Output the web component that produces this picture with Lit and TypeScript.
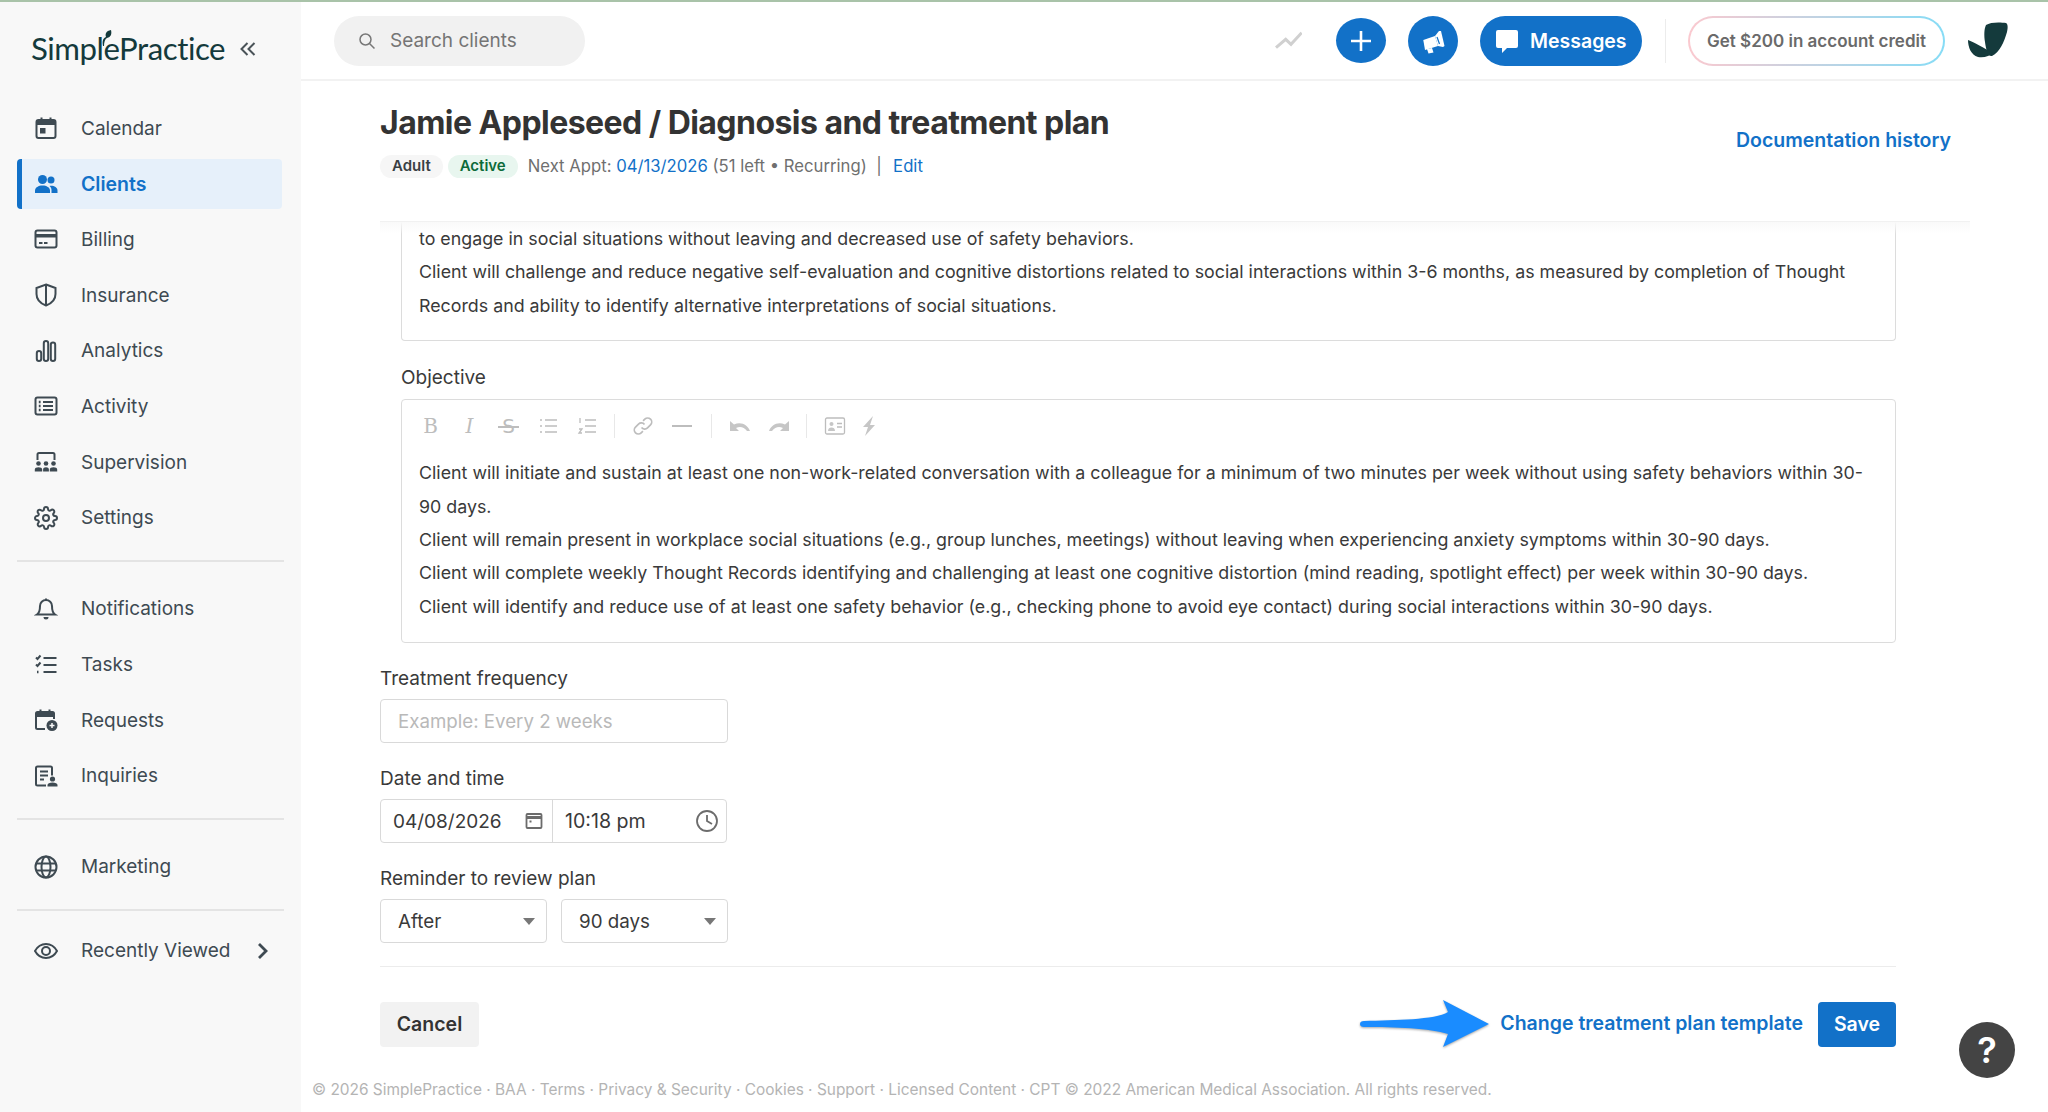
import { LitElement, html, svg, css } from 'lit';
import { customElement } from 'lit/decorators.js';

const icons = {
  calendar: svg`<rect x="2.500" y="4" width="19" height="18" rx="2"/><path class="f" d="M2.500 5.500a1.500 1.500 0 0 1 1.500-1.500h16a1.500 1.500 0 0 1 1.500 1.500V9h-19z"/><path d="M7.500 1.500V4M16.500 1.500V4"/><rect class="f" x="6" y="12" width="5.500" height="5.500"/>`,
  clients: svg`<g class="f"><circle cx="8.500" cy="7.500" r="4.500"/><circle cx="17" cy="8" r="3.500"/><path d="M1 21v-2.500c0-3 3.500-5 7.500-5s7.500 2 7.500 5V21z"/><path d="M17.500 21v-3c0-1.600-.8-3-2-4 .5-.1 1-.2 1.500-.2 3.500 0 6.500 1.800 6.500 4.600V21z"/></g>`,
  billing: svg`<rect x="1.500" y="3.500" width="21" height="17" rx="2"/><path class="f" d="M1.500 7h21v3.500h-21z"/><path d="M5 16h3.500M10 16h3.500"/>`,
  insurance: svg`<path d="M12 1.500l9.500 3.500v6c0 5.800-4 9.500-9.500 11.500C6.500 20.500 2.500 16.800 2.500 11V5z"/><path d="M12 1.500v21"/>`,
  analytics: svg`<rect x="2.800" y="12" width="4.400" height="10" rx="2.200"/><rect x="9.800" y="2" width="4.400" height="20" rx="2.200"/><rect x="16.800" y="3.500" width="4.400" height="18.500" rx="2.200"/>`,
  activity: svg`<rect x="1.500" y="3.500" width="21" height="17" rx="2"/><path d="M9 8h10M9 12h10M9 16h10"/><path class="d" d="M4.800 8h1.800M4.800 12h1.800M4.800 16h1.800"/>`,
  supervision: svg`<path d="M3.500 10V4.500a1.500 1.500 0 0 1 1.500-1.500h14a1.500 1.500 0 0 1 1.500 1.500V10"/><g class="f"><circle cx="4.500" cy="13.500" r="2.300"/><circle cx="12" cy="13.500" r="2.300"/><circle cx="19.500" cy="13.500" r="2.300"/><path d="M.8 21.500v-2c0-1.300 1.600-2.200 3.700-2.200s3.700.9 3.700 2.200v2zM9.100 21.500v-2c0-1.300 1.200-2.200 2.900-2.200s2.900.9 2.900 2.200v2zM15.800 21.500v-2c0-1.300 1.600-2.200 3.700-2.200s3.700.9 3.700 2.200v2z"/></g>`,
  settings: svg`<circle cx="12" cy="12" r="3"/><path d="M19.400 15a1.650 1.650 0 0 0 .33 1.820l.06.06a2 2 0 0 1 0 2.830 2 2 0 0 1-2.830 0l-.06-.06a1.650 1.650 0 0 0-1.820-.33 1.650 1.650 0 0 0-1 1.510V21a2 2 0 0 1-2 2 2 2 0 0 1-2-2v-.09A1.650 1.650 0 0 0 9 19.400a1.650 1.650 0 0 0-1.820.33l-.06.06a2 2 0 0 1-2.830 0 2 2 0 0 1 0-2.830l.06-.06a1.650 1.650 0 0 0 .33-1.820 1.650 1.650 0 0 0-1.510-1H3a2 2 0 0 1-2-2 2 2 0 0 1 2-2h.09A1.650 1.650 0 0 0 4.600 9a1.650 1.650 0 0 0-.33-1.820l-.06-.06a2 2 0 0 1 0-2.830 2 2 0 0 1 2.830 0l.06.06a1.650 1.650 0 0 0 1.820.33H9a1.650 1.650 0 0 0 1-1.510V3a2 2 0 0 1 2-2 2 2 0 0 1 2 2v.09a1.650 1.650 0 0 0 1 1.510 1.650 1.650 0 0 0 1.820-.33l.06-.06a2 2 0 0 1 2.830 0 2 2 0 0 1 0 2.830l-.06.06a1.650 1.650 0 0 0-.33 1.820V9a1.650 1.650 0 0 0 1.510 1H21a2 2 0 0 1 2 2 2 2 0 0 1-2 2h-.09a1.650 1.650 0 0 0-1.510 1z"/>`,
  bell: svg`<path d="M18 9A6 6 0 0 0 6 9c0 6.500-3 8.500-3 8.500h18s-3-2-3-8.500"/><path d="M12 1.500V3"/><path class="f" d="M9.500 20h5a2.500 2.500 0 0 1-5 0z"/>`,
  tasks: svg`<path d="M9.500 5h13M9.500 12h13M9.500 19h13"/><path d="M2 4.500l1.500 1.500L6.500 2.500M2 11.500l1.500 1.500L6.500 9.500"/><path class="d" d="M3 19h1.500"/>`,
  requests: svg`<path d="M11 21H3.500A1.500 1.500 0 0 1 2 19.500v-14A1.500 1.500 0 0 1 3.500 4h15A1.500 1.500 0 0 1 20 5.500V11"/><path class="f" d="M2 5.500A1.500 1.500 0 0 1 3.500 4h15A1.500 1.500 0 0 1 20 5.500V9H2z"/><path d="M6.500 1.500V4M15.500 1.500V4"/><circle class="f" cx="18" cy="17.500" r="5.500"/><path class="w" d="M15.500 17.500h5M18 15v5"/>`,
  inquiries: svg`<path d="M12 21.500H3.500A1.500 1.500 0 0 1 2 20V4a1.500 1.500 0 0 1 1.500-1.500h13A1.500 1.500 0 0 1 18 4v7.500"/><path d="M6 7.500h8M6 11.500h8M6 15.500h4"/><g class="f"><circle cx="18.500" cy="15" r="2.600"/><path d="M13.500 22.500v-1.500c0-1.500 2.200-2.500 5-2.500s5 1 5 2.500v1.500z"/></g>`,
  globe: svg`<circle cx="12" cy="12" r="10.500"/><ellipse cx="12" cy="12" rx="4.500" ry="10.500"/><path d="M2 8.500h20M2 15.500h20"/>`,
  eye: svg`<path d="M1 12c2.500-4.500 6.500-7 11-7s8.500 2.500 11 7c-2.500 4.500-6.500 7-11 7s-8.500-2.500-11-7z"/><circle cx="12" cy="12" r="4"/>`,
};

type NavItem = { label: string; icon: keyof typeof icons; active?: boolean };

const groupOne: NavItem[] = [
  { label: 'Calendar', icon: 'calendar' },
  { label: 'Clients', icon: 'clients', active: true },
  { label: 'Billing', icon: 'billing' },
  { label: 'Insurance', icon: 'insurance' },
  { label: 'Analytics', icon: 'analytics' },
  { label: 'Activity', icon: 'activity' },
  { label: 'Supervision', icon: 'supervision' },
  { label: 'Settings', icon: 'settings' },
];

const groupTwo: NavItem[] = [
  { label: 'Notifications', icon: 'bell' },
  { label: 'Tasks', icon: 'tasks' },
  { label: 'Requests', icon: 'requests' },
  { label: 'Inquiries', icon: 'inquiries' },
];

const goalLines = [
  'to engage in social situations without leaving and decreased use of safety behaviors.',
  'Client will challenge and reduce negative self-evaluation and cognitive distortions related to social interactions within 3-6 months, as measured by completion of Thought Records and ability to identify alternative interpretations of social situations.',
];

const objectiveLines = [
  'Client will initiate and sustain at least one non-work-related conversation with a colleague for a minimum of two minutes per week without using safety behaviors within 30-90 days.',
  'Client will remain present in workplace social situations (e.g., group lunches, meetings) without leaving when experiencing anxiety symptoms within 30-90 days.',
  'Client will complete weekly Thought Records identifying and challenging at least one cognitive distortion (mind reading, spotlight effect) per week within 30-90 days.',
  'Client will identify and reduce use of at least one safety behavior (e.g., checking phone to avoid eye contact) during social interactions within 30-90 days.',
];

const footerLinks = ['BAA', 'Terms', 'Privacy & Security', 'Cookies', 'Support', 'Licensed Content'];

@customElement('app-root')
export class AppRoot extends LitElement {
  static styles = css`
    :host {
      display: flex;
      width: 2048px;
      height: 1112px;
      box-sizing: border-box;
      border-top: 2px solid #a9c3a9;
      font-family: Inter, 'Liberation Sans', sans-serif;
      color: #333;
      background: #fff;
      overflow: hidden;
      position: relative;
    }
    * { box-sizing: border-box; }

    /* sidebar */
    .sidebar {
      width: 301px;
      flex-shrink: 0;
      background: #f8f8f8;
      padding: 0 17px;
    }
    .brand {
      height: 101px;
      display: flex;
      align-items: flex-start;
      padding: 26px 0 0 14px;
      color: #143a3c;
    }
    .logo {
      position: relative;
      font-family: Lato, sans-serif;
      font-size: 31.200px;
      letter-spacing: -0.450px;
      line-height: 40px;
      width: 208px;
      flex-shrink: 0;
      white-space: nowrap;
    }
    .logo svg {
      position: absolute;
      left: 66px;
      top: 1px;
      width: 16px;
      height: 18px;
    }
    .collapse {
      width: 18px;
      height: 18px;
      fill: none;
      stroke: #4a5358;
      stroke-width: 2;
      margin: 12px 0 0 0;
      flex-shrink: 0;
    }
    .group { display: flex; flex-direction: column; gap: 5.700px; }
    .item {
      width: 265px;
      height: 50px;
      display: flex;
      align-items: center;
      padding-left: 17px;
      gap: 23px;
      font-size: 19px;
      color: #3e4a52;
      border-radius: 4px;
      white-space: nowrap;
    }
    .item.active {
      background: #e6f0fa;
      color: #1271c8;
      font-weight: 600;
      font-size: 19.500px;
      border-left: 5px solid #1271c8;
      padding-left: 12px;
    }
    .ico {
      width: 24px;
      height: 24px;
      flex-shrink: 0;
      fill: none;
      stroke: currentColor;
      stroke-width: 2;
    }
    .ico .f { fill: currentColor; stroke: none; }
    .ico .d { stroke-width: 2.400; }
    .ico .w { stroke: #f8f8f8; stroke-width: 1.500; }
    .rule { height: 2px; background: #e4e4e4; width: 267px; }
    .rule.a { margin: 17px 0 22px; }
    .rule.b { margin: 17px 0 22px; }
    .rule.c { margin: 17px 0 15px; }
    .more { margin-left: auto; margin-right: 12px; width: 14px; height: 20px; fill: none; stroke: #3e4a52; stroke-width: 2.800; }

    /* top bar */
    .main { flex: 1; display: flex; flex-direction: column; min-width: 0; }
    .topbar {
      height: 79px;
      flex-shrink: 0;
      display: flex;
      align-items: center;
      padding: 0 39px 0 33px;
      border-bottom: 2px solid #f2f2f2;
    }
    .search {
      width: 251px;
      height: 50px;
      border-radius: 25px;
      background: #f1f1f1;
      display: flex;
      align-items: center;
      padding-left: 24px;
      gap: 14px;
      font-size: 19px;
      color: #757575;
    }
    .search svg { width: 18px; height: 18px; fill: none; stroke: #777; stroke-width: 1.500; }
    .actions { margin-left: auto; display: flex; align-items: center; gap: 22px; }
    .trend { width: 27px; height: 20px; fill: none; stroke: #d0d0d0; stroke-width: 3; margin-right: 12px; }
    .round {
      width: 50px;
      height: 50px;
      border-radius: 50%;
      background: #1271c8;
      display: flex;
      align-items: center;
      justify-content: center;
    }
    .round.short { height: 45px; border-radius: 25px / 22.500px; }
    .round svg { width: 26px; height: 26px; }
    .msg {
      width: 162px;
      height: 50px;
      border-radius: 25px;
      background: #1271c8;
      color: #fff;
      font-size: 19.500px;
      font-weight: 600;
      display: flex;
      align-items: center;
      padding-left: 15px;
      gap: 11px;
    }
    .msg svg { width: 24px; height: 26px; fill: #fff; }
    .vline { width: 1px; height: 44px; background: #ececec; margin-left: 1px; }
    .credit {
      width: 257px;
      height: 50px;
      border-radius: 25px;
      border: 2px solid transparent;
      background: linear-gradient(#fff, #fff) padding-box,
        linear-gradient(90deg, #fbc9cf, #86dcf6) border-box;
      display: flex;
      align-items: center;
      justify-content: center;
      font-size: 17px;
      font-weight: 600;
      color: #6a6a6a;
      white-space: nowrap;
    }
    .avatar { width: 41px; height: 37px; fill: #143a3c; margin-left: 1px; }

    /* page heading */
    .head {
      height: 140px;
      flex-shrink: 0;
      padding: 22px 97px 0 79px;
      display: flex;
      justify-content: space-between;
    }
    h1 {
      margin: 0;
      font-size: 32px;
      line-height: 40px;
      font-weight: 700;
      letter-spacing: -0.550px;
      color: #333;
    }
    .meta {
      margin-top: 11px;
      display: flex;
      align-items: center;
      font-size: 16.700px;
      line-height: 24px;
      color: #6f6f6f;
      white-space: pre;
    }
    .pill {
      height: 23px;
      border-radius: 12px;
      padding: 0 12px;
      display: flex;
      align-items: center;
      font-size: 15px;
      font-weight: 600;
      background: #f6f6f6;
      color: #3a3f44;
      margin-right: 5px;
    }
    .pill.on { background: #e8f6ef; color: #0d6b3a; margin-right: 10px; }
    .link { color: #1271c8; }
    .edit { margin-left: 2px; }
    .doc { font-size: 19.500px; font-weight: 600; color: #1271c8; margin-top: 25px; white-space: nowrap; }

    /* form */
    .scroll {
      flex: 1;
      min-height: 0;
      margin: 0 78px 0 79px;
      padding-right: 74px;
      position: relative;
      border-top: 1px solid #f1f1f1;
    }
    .scroll::before {
      content: '';
      position: absolute;
      left: 0;
      right: 0;
      top: 0;
      height: 12px;
      background: linear-gradient(#f9f9f9, rgba(255, 255, 255, 0));
      pointer-events: none;
    }
    .sub { margin-left: 21px; }
    .editor {
      border: 1px solid #dcdcdc;
      border-radius: 4px;
      font-size: 17.820px;
      line-height: 33.400px;
      color: #3a3a3a;
      padding: 0 24px 18px 17px;
    }
    .editor p { margin: 0; }
    .editor.clipped { border-top: 0; border-radius: 0 0 4px 4px; }
    .editor.full { margin-top: 9px; padding-top: 14px; padding-bottom: 19px; }
    label {
      display: block;
      font-size: 19px;
      line-height: 24px;
      color: #3a3a3a;
    }
    .tools { display: flex; align-items: center; height: 24px; margin: 0 0 18px -8px; color: #bdbdbd; }
    .tool { width: 39px; height: 24px; display: flex; align-items: center; justify-content: center; }
    .tool svg { width: 22px; height: 22px; fill: none; stroke: #bdbdbd; stroke-width: 1.700; }
    .tool svg .f { fill: #c6c6c6; stroke: none; }
    .tool span { font-family: 'DejaVu Serif', serif; font-size: 20px; line-height: 24px; color: #bdbdbd; }
    .tool span.strike { font-family: 'DejaVu Sans', sans-serif; position: relative; }
    .tool span.strike::after {
      content: '';
      position: absolute;
      left: -4px;
      right: -4px;
      top: 12px;
      height: 2px;
      background: #bdbdbd;
    }
    .tool span.i { font-style: italic; }
    .sep { width: 1px; height: 24px; background: #e8e8e8; margin: 0 8px; }
    .sep.wide { margin-left: 10px; }
    .bolt { margin-left: -5px; }
    .input {
      width: 348px;
      height: 44px;
      border: 1px solid #d9d9d9;
      border-radius: 4px;
      display: flex;
      align-items: center;
      padding-left: 17px;
      font-size: 18.700px;
      color: #b9b9b9;
      margin-top: 8px;
    }
    .datetime {
      width: 347px;
      height: 44px;
      margin-top: 8px;
      border: 1px solid #d9d9d9;
      border-radius: 4px;
      display: flex;
      font-size: 19px;
      color: #3a3a3a;
    }
    .datetime > div { display: flex; align-items: center; }
    .date { width: 172px; padding: 0 9px 0 12px; justify-content: space-between; border-right: 1px solid #d9d9d9; }
    .time { flex: 1; padding: 0 7px 0 12px; justify-content: space-between; font-size: 19.600px; }
    .datetime svg { fill: none; stroke: #6c6c6c; stroke-width: 1.800; }
    .selects { display: flex; gap: 14px; margin-top: 8px; }
    .select {
      width: 167px;
      height: 44px;
      border: 1px solid #d9d9d9;
      border-radius: 4px;
      display: flex;
      align-items: center;
      justify-content: space-between;
      padding: 0 11px 0 17px;
      font-size: 18.800px;
      color: #3a3a3a;
    }
    .caret { width: 0; height: 0; border: 6px solid transparent; border-top: 7px solid #777; border-bottom: 0; }
    .hr { height: 1px; background: #ececec; margin-top: 23px; }
    .bar {
      display: flex;
      align-items: center;
      justify-content: space-between;
      margin-top: 32px;
    }
    .btn {
      height: 45px;
      border-radius: 4px;
      display: flex;
      align-items: center;
      justify-content: center;
      font-size: 19.500px;
      font-weight: 600;
    }
    .cancel { width: 99px; background: #f2f2f2; color: #333; }
    .save { width: 78px; background: #1271c8; color: #fff; margin-left: 15px; }
    .right { display: flex; align-items: center; }
    .arrow { width: 130px; height: 50px; margin-right: 10px; filter: drop-shadow(0 1px 1px rgba(0, 0, 0, 0.35)); }
    .change { font-size: 19.500px; font-weight: 600; color: #1271c8; white-space: nowrap; margin-top: -2px; }

    .legal {
      height: 37px;
      flex-shrink: 0;
      padding-left: 11px;
      font-size: 15.430px;
      line-height: 30px;
      color: #b4b4b4;
      white-space: nowrap;
    }
    .help {
      position: absolute;
      left: 1959px;
      top: 1020px;
      width: 56px;
      height: 56px;
      border-radius: 50%;
      background: #444;
      color: #fff;
      font-size: 36px;
      font-weight: 600;
      display: flex;
      align-items: center;
      justify-content: center;
    }
  `;

  private navRow(item: NavItem, trailing?: unknown) {
    return html`
      <div class="item ${item.active ? 'active' : ''}">
        <svg class="ico" viewBox="0 0 24 24">${icons[item.icon]}</svg>
        <span>${item.label}</span>
        ${trailing}
      </div>
    `;
  }

  private renderSidebar() {
    return html`
      <aside class="sidebar">
        <div class="brand">
          <div class="logo">
            SimplePractice
            <svg viewBox="0 0 16 18"><path fill="#143a3c" d="M6 17C5 12 6 9 9 8c-1-3 0-6 5-7 1 4 0 7-4 8-2 1-3 4-3 8z"/></svg>
          </div>
          <svg class="collapse" viewBox="0 0 18 18"><path d="M8.500 3L2.500 9l6 6M15.500 3l-6 6 6 6"/></svg>
        </div>
        <div class="group">${groupOne.map((i) => this.navRow(i))}</div>
        <div class="rule a"></div>
        <div class="group">${groupTwo.map((i) => this.navRow(i))}</div>
        <div class="rule b"></div>
        ${this.navRow({ label: 'Marketing', icon: 'globe' })}
        <div class="rule c"></div>
        ${this.navRow(
          { label: 'Recently Viewed', icon: 'eye' },
          html`<svg class="more" viewBox="0 0 14 20"><path d="M3 3l7 7-7 7"/></svg>`,
        )}
      </aside>
    `;
  }

  private renderTopbar() {
    return html`
      <header class="topbar">
        <div class="search">
          <svg viewBox="0 0 18 18"><circle cx="7.500" cy="7.500" r="5.500"/><path d="M11.500 11.500L16.500 16.500"/></svg>
          Search clients
        </div>
        <div class="actions">
          <svg class="trend" viewBox="0 0 27 20"><path d="M1 16.700L10.700 8.300 16 13.300 26.700 1.700"/></svg>
          <div class="round short">
            <svg viewBox="0 0 26 26"><path d="M13 3v20M3 13h20" stroke="#fff" stroke-width="2.600"/></svg>
          </div>
          <div class="round">
            <svg viewBox="0 0 26 26" fill="#fff">
              <path d="M3.300 12L15 8l3 10L5 22z"/>
              <path d="M15 8l4-5h2l3.500 15-1.500 1-5-1z"/>
              <path d="M17 9l2.500 7" stroke="#1271c8" stroke-width="1.200"/>
              <path d="M7 21l5-1 1.500 4.500-5 1z"/>
            </svg>
          </div>
          <div class="msg">
            <svg viewBox="0 0 24 26"><path d="M3 2h18a2 2 0 0 1 2 2v14a2 2 0 0 1-2 2h-9l-5 5v-5H3a2 2 0 0 1-2-2V4a2 2 0 0 1 2-2z"/></svg>
            Messages
          </div>
          <div class="vline"></div>
          <div class="credit">Get $200 in account credit</div>
          <svg class="avatar" viewBox="8 6 41 37">
            <path d="M26 9C30 6 40 6 46 7c2 1 2 5 1 9-3 10-7 20-15 24-4 1-6-6-7-14-1-6-1-13 1-17z"/>
            <path d="M8 24c6 2 16 8 25 13-3 3-9 5-15 4C11 39 8 31 8 24z"/>
          </svg>
        </div>
      </header>
    `;
  }

  private renderHead() {
    return html`
      <div class="head">
        <div>
          <h1>Jamie Appleseed / Diagnosis and treatment plan</h1>
          <div class="meta">
            <span class="pill">Adult</span><span class="pill on">Active</span>Next Appt: <span class="link">04/13/2026</span> (51 left • Recurring)  |  <span class="link edit">Edit</span>
          </div>
        </div>
        <div class="doc">Documentation history</div>
      </div>
    `;
  }

  private renderTools() {
    return html`
      <div class="tools">
        <div class="tool"><span>B</span></div>
        <div class="tool"><span class="i">I</span></div>
        <div class="tool"><span class="strike">S</span></div>
        <div class="tool"><svg viewBox="0 0 22 22"><path d="M8 5h12M8 11h12M8 17h12M3 5h2M3 11h2M3 17h2"/></svg></div>
        <div class="tool"><svg viewBox="0 0 22 22"><path d="M9 5h11M9 11h11M9 17h11M4 3v5M3 14h3l-3 4h3" stroke-width="1.300"/></svg></div>
        <div class="sep"></div>
        <div class="tool"><svg viewBox="0 0 22 22"><path d="M9.500 12.500a4 4 0 0 0 6 .4l3-3a4 4 0 0 0-5.700-5.700l-1.700 1.700"/><path d="M12.500 9.500a4 4 0 0 0-6-.4l-3 3a4 4 0 0 0 5.700 5.700l1.700-1.700"/></svg></div>
        <div class="tool"><svg viewBox="0 0 22 22"><path d="M1 11h20" stroke-width="2"/></svg></div>
        <div class="sep wide"></div>
        <div class="tool"><svg viewBox="0 0 22 22"><path class="f" d="M1 6v10h9L7 13c4-2 8-1 11 3l3 0c-2-6-9-10-16-6.500z"/></svg></div>
        <div class="tool"><svg viewBox="0 0 22 22"><path class="f" d="M21 6v10h-9l3-3c-4-2-8-1-11 3H1c2-6 9-10 16-6.500z"/></svg></div>
        <div class="sep"></div>
        <div class="tool"><svg viewBox="0 0 22 22"><rect x="1.500" y="3" width="19" height="16" rx="1.500" stroke-width="1.300"/><circle class="f" cx="7.500" cy="9" r="2"/><path class="f" d="M4 16c0-2.500 1.500-3.500 3.500-3.500S11 13.500 11 16z"/><path d="M13 8.500h5M13 12h5" stroke-width="1.300"/></svg></div>
        <div class="tool bolt"><svg viewBox="0 0 22 22"><path class="f" d="M15 1L5 12h5l-3 9 10-11h-5z"/></svg></div>
      </div>
    `;
  }

  private renderForm() {
    return html`
      <div class="scroll">
        <div class="sub">
          <div class="editor clipped">${goalLines.map((l) => html`<p>${l}</p>`)}</div>
          <label style="margin-top:25px">Objective</label>
          <div class="editor full">
            ${this.renderTools()}
            ${objectiveLines.map((l) => html`<p>${l}</p>`)}
          </div>
        </div>
        <label style="margin-top:24px">Treatment frequency</label>
        <div class="input">Example: Every 2 weeks</div>
        <label style="margin-top:24px">Date and time</label>
        <div class="datetime">
          <div class="date">
            04/08/2026
            <svg width="18" height="18" viewBox="0 0 18 18"><rect x="1.500" y="2" width="15" height="14" rx="1"/><path d="M1.500 5.500h15" stroke-width="3"/><rect x="4.500" y="8.500" width="2" height="2" fill="#6c6c6c" stroke="none"/></svg>
          </div>
          <div class="time">
            10:18 pm
            <svg width="24" height="24" viewBox="0 0 24 24"><circle cx="12" cy="12" r="10"/><path d="M12 6v6l5 3"/></svg>
          </div>
        </div>
        <label style="margin-top:24px">Reminder to review plan</label>
        <div class="selects">
          <div class="select">After<i class="caret"></i></div>
          <div class="select">90 days<i class="caret"></i></div>
        </div>
        <div class="hr"></div>
        <div class="bar">
          <div class="btn cancel">Cancel</div>
          <div class="right">
            <svg class="arrow" viewBox="0 0 130 50"><path fill="#1a8cff" d="M0 25q0-3 4-3c31-1 71-1 84-9L83 1l46 24-46 23 5-13c-18-6-53-7-84-7q-4 0-4-3z"/></svg>
            <span class="change">Change treatment plan template</span>
            <div class="btn save">Save</div>
          </div>
        </div>
      </div>
    `;
  }

  render() {
    return html`
      ${this.renderSidebar()}
      <main class="main">
        ${this.renderTopbar()}
        ${this.renderHead()}
        ${this.renderForm()}
        <div class="legal">© 2026 SimplePractice · ${footerLinks.join(' · ')} · CPT © 2022 American Medical Association. All rights reserved.</div>
      </main>
      <div class="help">?</div>
    `;
  }
}
